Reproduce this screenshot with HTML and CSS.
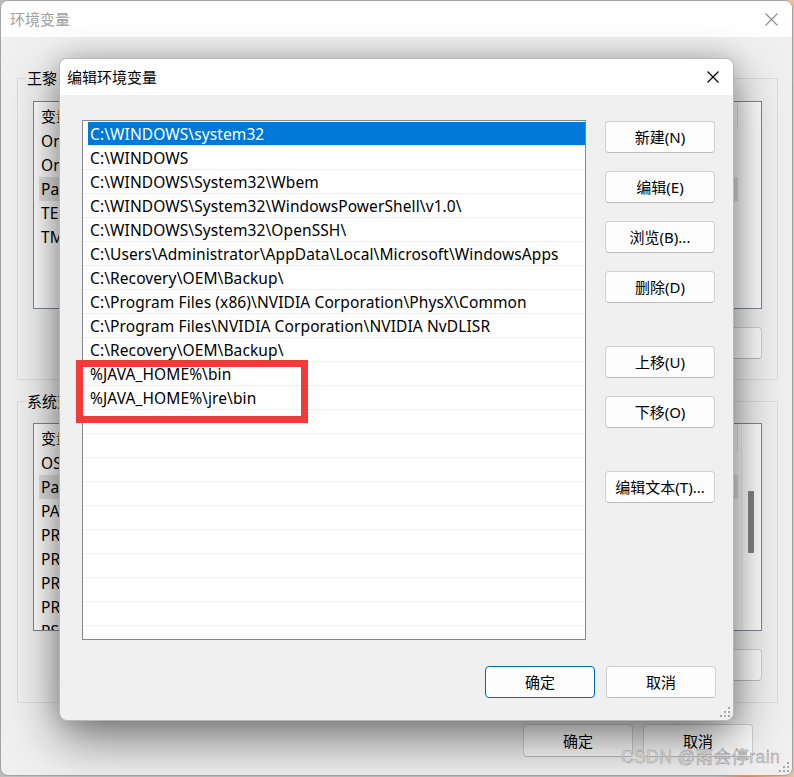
FILE: index.html
```html
<!DOCTYPE html>
<html lang="zh-CN">
<head>
<meta charset="utf-8">
<title>编辑环境变量</title>
<link rel="stylesheet" href="styles.css">
</head>
<body>
<div class="desktop">
  <section class="window outer">
    <header class="titlebar outer-title">
      <span class="title">环境变量</span>
      <svg class="close" width="13" height="13" viewBox="0 0 13 13"><path d="M0.5 0.5L12.5 12.5M12.5 0.5L0.5 12.5" stroke="currentColor" stroke-width="1.1" fill="none"/></svg>
    </header>
    <div class="outer-body">
      <div class="group">
        <span class="legend">王黎 的用户变量(U)</span>
        <div class="olist">
          <div class="olist-main">
            <div class="ohead"><span class="hc1">变量</span><span class="hc2">值</span></div>
            <div class="orow"><span class="ocell">OneDrive</span></div>
            <div class="orow"><span class="ocell">OneDriveConsumer</span></div>
            <div class="orow"><span class="ocell sel-gray">Path</span></div>
            <div class="orow"><span class="ocell">TEMP</span></div>
            <div class="orow"><span class="ocell">TMP</span></div>
          </div>
        </div>
        <div class="obtns">
          <button class="btn">新建(N)...</button>
          <button class="btn">编辑(E)...</button>
          <button class="btn">删除(D)</button>
        </div>
      </div>
      <div class="group group-sys">
        <span class="legend">系统变量(S)</span>
        <div class="olist">
          <div class="olist-main">
            <div class="ohead"><span class="hc1">变量</span><span class="hc2 hc2-narrow">值</span></div>
            <div class="orow"><span class="ocell">OS</span></div>
            <div class="orow"><span class="ocell sel-gray">Path</span></div>
            <div class="orow"><span class="ocell">PATHEXT</span></div>
            <div class="orow"><span class="ocell">PROCESSOR_ARCHITECTURE</span></div>
            <div class="orow"><span class="ocell">PROCESSOR_IDENTIFIER</span></div>
            <div class="orow"><span class="ocell">PROCESSOR_LEVEL</span></div>
            <div class="orow"><span class="ocell">PROCESSOR_REVISION</span></div>
            <div class="orow"><span class="ocell">PSModulePath</span></div>
          </div>
          <div class="vscroll"><div class="thumb"></div></div>
        </div>
        <div class="obtns">
          <button class="btn">新建(W)...</button>
          <button class="btn">编辑(I)...</button>
          <button class="btn">删除(L)</button>
        </div>
      </div>
      <div class="outer-footer">
        <button class="btn">确定</button>
        <button class="btn">取消</button>
      </div>
    </div>
    <div class="grip grip-outer"><i></i><i></i><i></i><i></i><i></i><i></i></div>
  </section>

  <section class="window dialog">
    <header class="titlebar dlg-title">
      <span class="title">编辑环境变量</span>
      <svg class="close" width="12" height="12" viewBox="0 0 12 12"><path d="M0.5 0.5L11.5 11.5M11.5 0.5L0.5 11.5" stroke="currentColor" stroke-width="1.15" fill="none"/></svg>
    </header>
    <div class="dlg-body">
      <div class="dlg-main">
        <div class="plist">
          <div class="prow"><span class="pcell selected">C:\WINDOWS\system32</span></div>
          <div class="prow"><span class="pcell">C:\WINDOWS</span></div>
          <div class="prow"><span class="pcell">C:\WINDOWS\System32\Wbem</span></div>
          <div class="prow"><span class="pcell">C:\WINDOWS\System32\WindowsPowerShell\v1.0\</span></div>
          <div class="prow"><span class="pcell">C:\WINDOWS\System32\OpenSSH\</span></div>
          <div class="prow"><span class="pcell">C:\Users\Administrator\AppData\Local\Microsoft\WindowsApps</span></div>
          <div class="prow"><span class="pcell">C:\Recovery\OEM\Backup\</span></div>
          <div class="prow"><span class="pcell">C:\Program Files (x86)\NVIDIA Corporation\PhysX\Common</span></div>
          <div class="prow"><span class="pcell">C:\Program Files\NVIDIA Corporation\NVIDIA NvDLISR</span></div>
          <div class="prow"><span class="pcell">C:\Recovery\OEM\Backup\</span></div>
          <div class="prow"><span class="pcell">%JAVA_HOME%\bin</span></div>
          <div class="prow"><span class="pcell">%JAVA_HOME%\jre\bin</span></div>
          <div class="prow"></div>
          <div class="prow"></div>
          <div class="prow"></div>
          <div class="prow"></div>
          <div class="prow"></div>
          <div class="prow"></div>
          <div class="prow"></div>
          <div class="prow"></div>
          <div class="prow"></div>
          <div class="prow"></div>
        </div>
        <div class="side">
          <button class="btn">新建(N)</button>
          <button class="btn">编辑(E)</button>
          <button class="btn">浏览(B)...</button>
          <button class="btn">删除(D)</button>
          <button class="btn gap-big">上移(U)</button>
          <button class="btn">下移(O)</button>
          <button class="btn gap-big">编辑文本(T)...</button>
        </div>
      </div>
      <div class="dlg-footer">
        <button class="btn btn-default">确定</button>
        <button class="btn">取消</button>
      </div>
    </div>
    <div class="grip"><i></i><i></i><i></i><i></i><i></i><i></i></div>
  </section>

  <div class="annot"></div>
  <div class="watermark">CSDN @雨会停rain</div>
</div>
</body>
</html>
```

FILE: styles.css
```css
* { box-sizing: border-box; }
html, body { margin: 0; padding: 0; }
body {
  font-family: "Noto Sans", "Noto Sans CJK SC", sans-serif;
  font-size: 15px;
  color: #000;
}
.desktop {
  position: relative;
  width: 794px;
  height: 777px;
  overflow: hidden;
  background: linear-gradient(90deg, #bdbdbd 0, #bdbdbd 90%, #d98a5a 94%, #e9c3a0 100%);
}

/* windows */
.window {
  position: absolute;
  display: flex;
  flex-direction: column;
  border-radius: 8px;
  overflow: hidden;
}
.titlebar {
  flex: none;
  display: flex;
  align-items: center;
  justify-content: space-between;
  background: #fff;
}
.title { line-height: 20px; }

.outer {
  left: 0;
  top: 0;
  width: 793px;
  height: 776px;
  border: 1px solid #a3a3a3;
  background: #f0f0f0;
}
.outer-title {
  height: 36px;
  padding: 0 14px 0 9px;
}
.outer-title .title { color: #a0a0a0; }
.outer-title .close { color: #8c8c8c; }

.outer-body {
  display: flex;
  flex-direction: column;
  padding: 41px 0 0 16px;
}
.group {
  position: relative;
  width: 761px;
  height: 302px;
  border: 1px solid #dcdcdc;
  padding: 22px 15px 0 15px;
  display: flex;
  flex-direction: column;
}
.group-sys {
  margin-top: 21px;
  padding-top: 21px;
}
.legend {
  position: absolute;
  left: 8px;
  top: -11px;
  padding: 0 1px;
  line-height: 20px;
  background: #f0f0f0;
}
.olist {
  height: 208px;
  border: 1px solid #828790;
  background: #fff;
  display: flex;
  overflow: hidden;
}
.olist-main { flex: 1; min-width: 0; }
.ohead {
  display: flex;
  height: 27px;
  align-items: stretch;
}
.ohead span {
  display: flex;
  align-items: center;
  padding-left: 7px;
  border-right: 1px solid #e5e5e5;
}
.hc1 { width: 150px; }
.hc2 { width: 554px; }
.hc2-narrow { width: 554px; }
.orow { height: 24px; display: flex; }
.ocell {
  margin-left: 5px;
  width: 699px;
  padding-left: 2px;
  line-height: 24px;
  font-size: 15.5px;
  letter-spacing: 0.1px;
  white-space: nowrap;
  overflow: hidden;
}
.sel-gray { background: #e3e3e3; }
.vscroll {
  flex: none;
  width: 20px;
  border-left: 1px solid #f2f2f2;
  padding: 67px 0 0 6px;
}
.thumb {
  width: 6px;
  height: 62px;
  background: #858585;
  border-radius: 1px;
}
.obtns {
  margin-top: 18px;
  display: flex;
  justify-content: flex-end;
  gap: 10px;
}
.outer-footer {
  margin-top: 21px;
  display: flex;
  justify-content: flex-end;
  gap: 10px;
  padding-right: 39px;
}
.outer-footer .btn { height: 33px; }

/* buttons */
.btn {
  width: 110px;
  height: 32px;
  border: 1px solid #d0d0d0;
  border-bottom-color: #bcbcbc;
  border-radius: 4px;
  background: #fdfdfd;
  font-family: "Noto Sans", "Noto Sans CJK SC", sans-serif;
  font-size: 15px;
  color: #000;
  padding: 0;
  line-height: 20px;
  flex: none;
}
.btn-default {
  border: 1px solid #0067c0;
}

/* dialog */
.dialog {
  left: 59px;
  top: 58px;
  width: 675px;
  height: 663px;
  border: 1px solid #b8b8b8;
  background: #f0f0f0;
  box-shadow: 0 18px 50px rgba(0, 0, 0, 0.5), 0 0 22px rgba(0, 0, 0, 0.16);
  z-index: 2;
}
.dlg-title {
  height: 36px;
  padding: 0 14px 0 7px;
}
.dlg-body {
  display: flex;
  flex-direction: column;
  padding: 25px 17px 0 22px;
}
.dlg-main { display: flex; }
.plist {
  width: 504px;
  height: 520px;
  border: 1px solid #828790;
  background: #fff;
  padding-top: 1px;
  overflow: hidden;
  flex: none;
}
.prow {
  height: 24px;
  border-bottom: 1px solid #efefef;
  display: flex;
}
.pcell {
  flex: 1;
  margin-left: 5px;
  padding: 1px 0 0 2px;
  height: 23px;
  line-height: 23px;
  font-size: 15.5px;
  letter-spacing: 0.1px;
  white-space: nowrap;
}
.pcell.selected {
  background: #0078d7;
  color: #fff;
}
.side {
  margin-left: 19px;
  padding-top: 1px;
  display: flex;
  flex-direction: column;
  gap: 18px;
}
.side .gap-big { margin-top: 25px; }
.dlg-footer {
  margin-top: 26px;
  display: flex;
  justify-content: flex-end;
  gap: 11px;
}

/* resize grips */
.grip {
  position: absolute;
  right: 3px;
  bottom: 3px;
  width: 10px;
  height: 10px;
}
.grip i {
  position: absolute;
  width: 2px;
  height: 2px;
  background: #a8a8a8;
}
.grip i:nth-child(1) { right: 0; top: 0; }
.grip i:nth-child(2) { right: 0; top: 4px; }
.grip i:nth-child(3) { right: 4px; top: 4px; }
.grip i:nth-child(4) { right: 0; top: 8px; }
.grip i:nth-child(5) { right: 4px; top: 8px; }
.grip i:nth-child(6) { right: 8px; top: 8px; }

/* annotation + watermark */
.annot {
  position: absolute;
  left: 76px;
  top: 360px;
  width: 232px;
  height: 63px;
  border: 7px solid #f23a3a;
  z-index: 3;
}
.watermark {
  position: absolute;
  left: 621px;
  top: 746px;
  font-family: "Liberation Sans", "Noto Sans CJK SC", sans-serif;
  font-size: 17.5px;
  letter-spacing: 0.4px;
  line-height: 22px;
  color: #d6d6d6;
  -webkit-text-stroke: 0.4px #8f8f8f;
  z-index: 4;
  white-space: nowrap;
}
```
